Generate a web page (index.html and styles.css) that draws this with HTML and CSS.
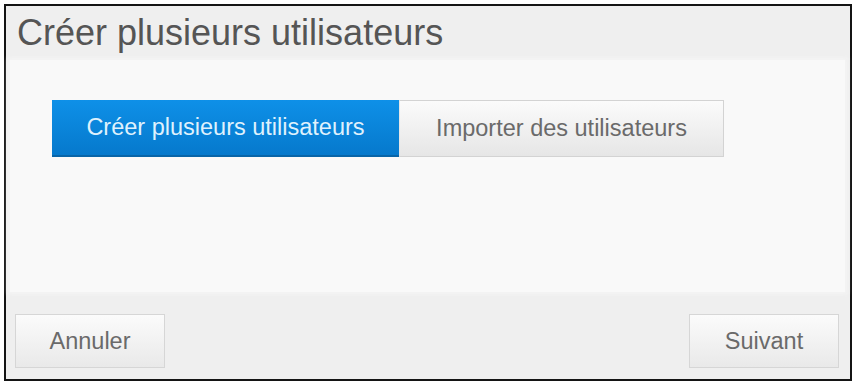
FILE: index.html
```html
<!DOCTYPE html>
<html lang="fr">
<head>
<meta charset="utf-8">
<title>Créer plusieurs utilisateurs</title>
<link rel="stylesheet" href="styles.css">
</head>
<body>
<div class="frame">
  <h1 class="title">Créer plusieurs utilisateurs</h1>
  <div class="panel">
    <div class="tabs">
      <button class="tab tab-active">Créer plusieurs utilisateurs</button>
      <button class="tab tab-idle">Importer des utilisateurs</button>
    </div>
  </div>
  <div class="footer">
    <button class="btn">Annuler</button>
    <button class="btn">Suivant</button>
  </div>
</div>
</body>
</html>
```
FILE: styles.css
```css
html, body {
  margin: 0;
  padding: 0;
  background: #ffffff;
}
body {
  font-family: "Liberation Sans", Arial, sans-serif;
}
.frame {
  box-sizing: border-box;
  margin: 4px;
  width: 848px;
  height: 377px;
  border: 2px solid #141414;
  background: #efefef;
  display: flex;
  flex-direction: column;
}
.title {
  margin: 0;
  height: 54px;
  line-height: 54px;
  padding-left: 11px;
  font-size: 36px;
  font-weight: normal;
  color: #555555;
  white-space: nowrap;
}
.panel {
  margin: 0 5px 0 4px;
  height: 232px;
  box-sizing: border-box;
  padding: 40px 0 0 42px;
  background: #f9f9f9;
  box-shadow: 0 0 4px 2px #f5f5f5;
}
.tabs {
  display: flex;
}
.tab {
  height: 57px;
  box-sizing: border-box;
  font-family: "Liberation Sans", Arial, sans-serif;
  font-size: 23.5px;
  padding: 0;
  margin: 0;
  cursor: pointer;
}
.tab-active {
  width: 347px;
  border: none;
  border-bottom: 2px solid #0865a8;
  background: linear-gradient(#0e90e8, #0679cc);
  color: #dff1fd;
}
.tab-idle {
  width: 325px;
  border: 1px solid #d3d3d3;
  border-left: 1px solid #e6e6e6;
  background: linear-gradient(#fbfbfb, #e6e6e6);
  color: #6a6a6a;
}
.footer {
  flex: 1;
  display: flex;
  justify-content: space-between;
  align-items: flex-start;
  padding: 22px 11px 0 9px;
}
.btn {
  width: 150px;
  height: 54px;
  box-sizing: border-box;
  border: 1px solid #d6d6d6;
  background: linear-gradient(#fbfbfb, #e9e9e9);
  font-family: "Liberation Sans", Arial, sans-serif;
  font-size: 23.5px;
  color: #6a6a6a;
  padding: 0;
  cursor: pointer;
}
```
